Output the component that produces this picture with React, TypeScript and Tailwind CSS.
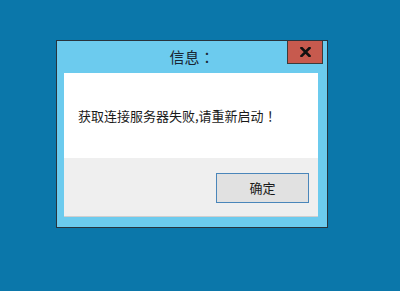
import React from 'react';

const font = { fontFamily: '"Noto Sans CJK SC", "Noto Sans", sans-serif' };
const punct = { fontFamily: '"Noto Sans CJK JP", "Noto Sans CJK SC", sans-serif' };

const App: React.FC = () => {
  return (
    <div className="w-[400px] h-[291px] bg-[#0b77aa] pt-[40px] pl-[56px]" style={font}>
      <div className="w-[272px] h-[188px] border border-[#28343d] bg-[#6ccbee] flex flex-col">
        <div className="relative h-[32px] flex items-center justify-center">
          <span className="text-[15px] text-[#1a2633] leading-none pb-[1px]">
            信息<span style={punct}>：</span>
          </span>
          <button className="absolute top-0 right-[4px] w-[36px] h-[23px] bg-[#c75a4e] border border-[#3b3b3b] border-t-0 flex items-center justify-center">
            <svg width="11" height="10" viewBox="0 0 11 10">
              <path d="M1.5 1 L9.5 9 M9.5 1 L1.5 9" stroke="#111" strokeWidth="2.6" strokeLinecap="square" />
            </svg>
          </button>
        </div>
        <div className="ml-[7px] w-[254px] h-[144px] flex flex-col">
          <div className="h-[85px] bg-white flex items-center pl-[14px] pt-[1px]">
            <span className="text-[13px] text-[#1a1a1a]">
              获取连接服务器失败,请重新启动<span style={punct}>！</span>
            </span>
          </div>
          <div className="flex-1 bg-[#efefef] border-b border-[#cfcfcf] flex justify-end pt-[15px] pr-[9px]">
            <button className="w-[93px] h-[30px] bg-[#e1e1e1] border border-[#4a86ba] text-[13px] text-[#1a1a1a] flex items-center justify-center">
              确定
            </button>
          </div>
        </div>
      </div>
    </div>
  );
};

export default App;
